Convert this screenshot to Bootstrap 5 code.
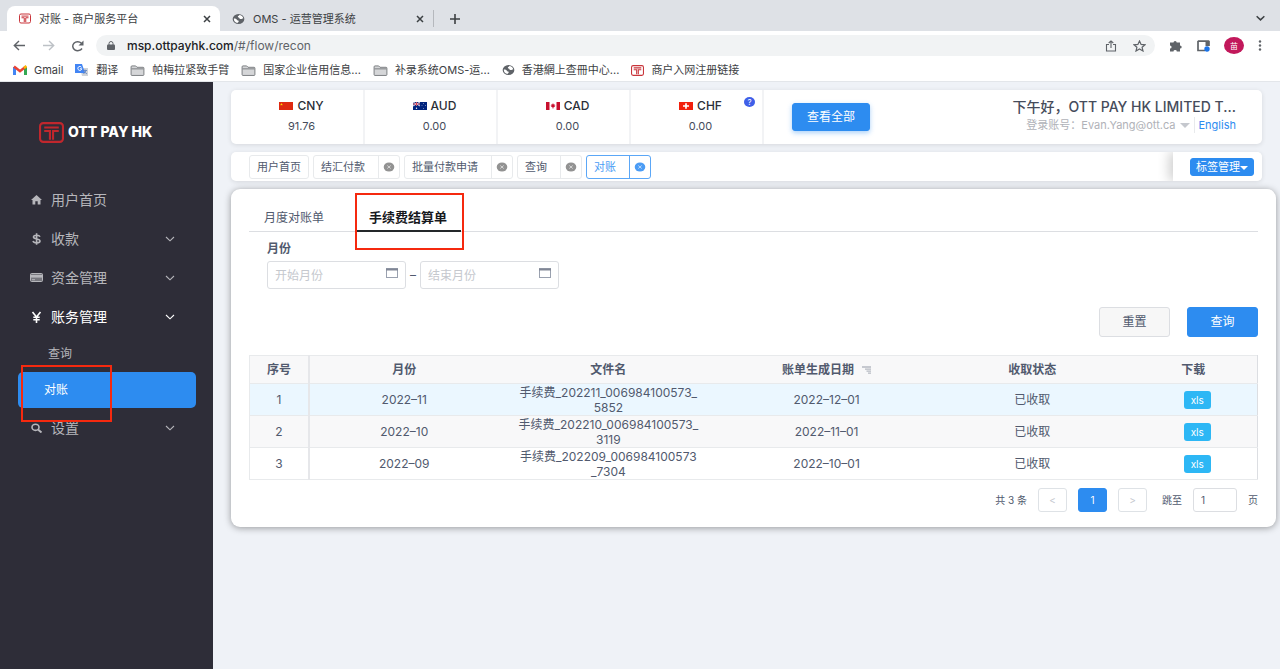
<!DOCTYPE html>
<html lang="zh-CN">
<head>
<meta charset="utf-8">
<meta name="viewport" content="width=device-width, initial-scale=1">
<title>对账 - 商户服务平台</title>
<link href="https://cdn.jsdelivr.net/npm/bootstrap@5.3.0/dist/css/bootstrap.min.css" rel="stylesheet">
<style>
  :root { --blue: #2d8cf0; --line: #e8eaec; --ink: #515a6e; }
  body { font-family: Inter, "Noto Sans CJK SC", sans-serif; font-size: 12px; line-height: 16px; color: var(--ink); background: #eff2f7; }
  a { text-decoration: none; color: inherit; }
  button { font: inherit; color: inherit; }
  svg { display: block; flex: none; }
  .plain { border: 0; background: none; padding: 0; }
  /* browser frame */
  .tabstrip { height: 31px; background: #dee1e6; padding: 6px 14px 0 7px; font-size: 11px; color: #3c4043; }
  .page-tab { height: 25px; padding: 0 9px 0 12px; width: 213px; }
  .page-tab.current { background: #fff; border-radius: 8px 8px 0 0; }
  .addressbar { height: 29px; background: #fff; padding: 0 18px 0 13px; color: #5f6368; }
  .omni { height: 21px; border-radius: 11px; background: #f1f3f4; padding: 0 9px 0 11px; font-size: 12px; }
  .omni b { font-weight: 500; color: #202124; }
  .browser-tools { gap: 14px; padding-left: 14px; }
  .avatar { width: 20px; height: 17px; border-radius: 50%; background: #c2185b; color: #fff; font-size: 8px; }
  .bookmarks { height: 22px; background: #fff; border-bottom: 1px solid #e3e6ea; padding: 0 13px 1px; gap: 12px; font-size: 11px; color: #3c4043; }
  .bookmarks a { gap: 7px; white-space: nowrap; }
  /* sidebar */
  .side { width: 213px; background: #2e2d38; color: #b6b6bb; flex: none; }
  .brand { height: 98px; padding: 2px 0 0 39px; gap: 4px; color: #fff; font-size: 14px; font-weight: 800; }
  .side-item { height: 39px; padding: 0 38px 0 29px; gap: 7px; font-size: 14px; }
  .side-item.open { color: #fff; }
  .side-sub { height: 36px; padding-left: 48px; }
  .side-sub.active { margin: 0 17px 0 18px; padding-left: 26px; border-radius: 5px; background: var(--blue); color: #fff; }
  .callout { position: absolute; border: 2px solid #f5290f; pointer-events: none; }
  .callout-side { inset: -7px 84px -14px 3px; }
  .callout-tab { inset: -11px -3px -20px 0; }
  /* content */
  .work { padding: 8px 4px 0 18px; min-width: 0; }
  .panel { background: #fff; border-radius: 5px; box-shadow: 0 1px 5px #0000001c; margin-right: 14px; }
  .wallet { height: 54px; margin-bottom: 8px; padding-left: 1px; }
  .money { width: 133px; border-right: 2px solid #f2f3f5; color: #464c5b; gap: 4px; padding: 0 0 2px 8px; }
  .money strong { font-weight: 500; color: #2b2f38; gap: 4px; }
  .money span { font-size: 11px; }
  .help { position: absolute; top: 7px; right: 7px; width: 11px; height: 10px; border-radius: 50%; background: #3f5fe8; color: #fff; font-size: 8px; line-height: 10px; }
  .btn { --bs-btn-border-radius: 3px; --bs-btn-padding-y: 0; --bs-btn-padding-x: 0; font-size: 12px; line-height: 16px; }
  .btn-primary { --bs-btn-bg: #2d8cf0; --bs-btn-border-color: #2d8cf0; }
  .btn-all { width: 78px; height: 28px; margin-left: 28px; box-shadow: 0 2px 5px #2d8cf066; }
  .greeting { padding: 7px 26px 0 0; }
  .hello { font-size: 14px; line-height: 20px; font-weight: 500; color: #464c5b; }
  .account { font-size: 11px; color: #b0b2b8; }
  .account .english { color: var(--blue); border-left: 1px solid var(--line); padding-left: 4px; margin-left: 4px; }
  .open-tabs { height: 29px; margin-bottom: 8px; overflow: hidden; font-size: 11px; }
  .open-tabs .list { padding-left: 18px; gap: 4px; }
  .chip { height: 24px; border: 1px solid var(--line); border-radius: 3px; }
  .chip > a { padding: 0 7px; }
  .chip.closable > a { padding-right: 13px; }
  .chip > button { width: 21px; align-self: stretch; border-left: 1px solid var(--line); color: #929292; }
  .chip.on, .chip.on > button { border-color: #5ba7f7; color: #4b9cf5; }
  .tag-tools { width: 89px; padding-right: 8px; box-shadow: -4px 0 12px #00000030; background: #fff; }
  .tag-tools .btn { width: 64px; height: 18px; font-size: 11px; }
  .tag-tools .dropdown-toggle::after { margin-left: 0; vertical-align: 1px; border-width: 4px 4px 0; }
  .sheet { background: #fff; border-radius: 9px; box-shadow: 0 1px 7px #00000060; padding: 15px 18px; }
  .sheet-tabs { height: 28px; border-bottom: 1px solid #dcdee2; }
  .sheet-tabs a { height: 28px; padding: 0 15px; }
  .sheet-tabs .here { margin-left: 16px; padding: 0 14px; font-size: 13px; font-weight: 700; color: #17191d; border-bottom: 2px solid #24282a; }
  .filters { padding: 9px 0 0 18px; }
  .filters label { font-weight: 700; }
  .month { width: 139px; height: 28px; }
  .month .form-control { height: 28px; font-size: 12px; padding: 0 30px 0 7px; border-color: #dcdee2; border-radius: 3px; }
  .month .form-control::placeholder { color: #c5c8ce; }
  .month svg { position: absolute; right: 8px; top: 7px; }
  .actions { gap: 17px; margin: 18px 0; }
  .actions .btn { width: 71px; height: 30px; }
  .btn-reset { background: #f7f7f7; border-color: #dcdee2; color: var(--ink); }
  .records { table-layout: fixed; margin: 0; text-align: center; border: 1px solid var(--line); border-right-color: #dcdee2; color: var(--ink); --bs-table-color: #515a6e; }
  .records th, .records td { padding: 0; vertical-align: middle; border-color: var(--line); line-height: 15px; }
  .records th { height: 28px; background: #f8f8f9; color: var(--ink); font-weight: 700; }
  .records td { height: 32px; }
  .records th:first-child, .records td:first-child { border-right: 2px solid #e6e7ea; }
  .records .hot td { background: #ebf7ff; }
  .records .even td { background: #f8f8f9; }
  .records .fname { padding: 0 12px; }
  .btn-xls { width: 27px; height: 18px; font-size: 10px; background: #2db7f5; color: #fff; margin-left: 8px; border: 0; }
  .pager { margin-top: 8px; gap: 11px; font-size: 10px; }
  .pager .btn, .pager .form-control { height: 24px; font-size: 10px; border-radius: 3px; border-color: #dcdee2; }
  .pager .btn { width: 29px; color: #c5c8ce; }
  .pager .btn-primary { color: #fff; border-color: var(--blue); }
  .pager .form-control { width: 44px; padding: 0 7px; color: var(--ink); }
</style>
</head>
<body class="d-flex flex-column min-vh-100">
<svg width="0" height="0" class="position-absolute" aria-hidden="true">
  <symbol id="ott" viewBox="0 0 24 20"><rect x="1" y="1" width="22" height="18" rx="3" fill="none" stroke="currentColor" stroke-width="2"/><path d="M5 5.200h14M5 8.500h5.500V17M19 8.500h-5.500V17" fill="none" stroke="currentColor" stroke-width="2"/></symbol>
  <symbol id="globe" viewBox="0 0 16 14"><ellipse cx="8" cy="7" rx="7.200" ry="6.300" fill="#5f6368"/><path d="M2.300 6.500c2 0 3 .5 4 1.600.8.900 2 .4 2 1.700 0 1.200-1.300 1-1.500 2.200C4 11.700 2 9.500 2.300 6.500zM9 2c2.500 0 4.400 1.800 4.900 4-1.400.2-2.300 1.600-3.700 1C8.800 6.400 9.500 5.300 8 5c-1.200-.2-1-1.700.2-1.900.6-.1.500-.7.800-1.100z" fill="#fff"/></symbol>
  <symbol id="folder" viewBox="0 0 16 12"><path d="M1 10.500V2q0-1 1-1h4l1.500 1.500H14q1 0 1 1v7q0 .9-1 .9H2q-1 0-1-.9z" fill="#d5d6d8" stroke="#74777b"/><path d="M1.500 4.200h13" stroke="#74777b"/></symbol>
  <symbol id="x" viewBox="0 0 8 8"><path d="M1 1l6 6M7 1L1 7" stroke="currentColor" stroke-width="1.500"/></symbol>
  <symbol id="xc" viewBox="0 0 12 10"><ellipse cx="6" cy="5" rx="5.300" ry="4.600" fill="currentColor"/><path d="M4.300 3.500l3.400 3M7.700 3.500l-3.400 3" stroke="#fff" stroke-width=".6"/></symbol>
  <symbol id="down" viewBox="0 0 10 6"><path d="M1 1l4 3.800L9 1" fill="none" stroke="currentColor" stroke-width="1.100"/></symbol>
  <symbol id="cal" viewBox="0 0 12 10"><rect x=".5" y=".5" width="11" height="9" fill="none" stroke="#9aa1af"/><path d="M0 1.500h12" stroke="#808695" stroke-width="2"/></symbol>
</svg>

<header>
  <div class="tabstrip d-flex align-items-center">
    <div class="page-tab current d-flex align-items-center">
      <svg width="12" height="11" style="color:#c9353b"><use href="#ott"/></svg>
      <span class="ms-2 me-auto">对账 - 商户服务平台</span>
      <button class="plain" aria-label="关闭"><svg width="8" height="8"><use href="#x"/></svg></button>
    </div>
    <div class="page-tab d-flex align-items-center">
      <svg width="13" height="12"><use href="#globe"/></svg>
      <span class="ms-2 me-auto">OMS - 运营管理系统</span>
      <button class="plain" aria-label="关闭"><svg width="8" height="8"><use href="#x"/></svg></button>
    </div>
    <div class="vr my-1"></div>
    <button class="plain ms-3" aria-label="新标签页"><svg width="10" height="10"><path d="M5 0v10M0 5h10" stroke="#3c4043" stroke-width="1.600"/></svg></button>
    <button class="plain ms-auto" aria-label="搜索标签页"><svg width="11" height="7" viewBox="0 0 10 6"><path d="M1.500 1L5 4.300 8.500 1" fill="none" stroke="#3c4043" stroke-width="1.400"/></svg></button>
  </div>
  <div class="addressbar d-flex align-items-center">
    <button class="plain" aria-label="后退"><svg width="13" height="11"><path d="M12 5.500H1.500M6 1L1.300 5.500 6 10" fill="none" stroke="#5f6368" stroke-width="1.400"/></svg></button>
    <button class="plain ms-3" aria-label="前进"><svg width="13" height="11"><path d="M1 5.500h10.500M7 1l4.700 4.500L7 10" fill="none" stroke="#bdc1c6" stroke-width="1.400"/></svg></button>
    <button class="plain ms-3 me-2" aria-label="刷新"><svg width="13" height="12"><path d="M11 8.500A5 4.500 0 1 1 10.300 3" fill="none" stroke="#5f6368" stroke-width="1.500"/><path d="M12.500.5v5H7.500z" fill="#5f6368"/></svg></button>
    <div class="omni ms-1 flex-grow-1 d-flex align-items-center">
      <svg width="8" height="9"><rect y="3.500" width="8" height="5.500" rx="1" fill="#5f6368"/><path d="M2 4V2.500a2 2 0 0 1 4 0V4" fill="none" stroke="#5f6368"/></svg>
      <span class="ms-2 ps-1 me-auto"><b>msp.ottpayhk.com</b>/#/flow/recon</span>
      <button class="plain me-3" aria-label="分享"><svg width="12" height="12"><path d="M4 4.500H1.500v6.500h9V4.500H8M6 8V1M3.700 3L6 .9 8.300 3" fill="none" stroke="#5f6368" stroke-width="1.100"/></svg></button>
      <button class="plain" aria-label="收藏"><svg width="13" height="12"><path d="M6.500 1l1.600 3.400 3.900.4-2.900 2.500.9 3.700-3.500-2-3.500 2 .9-3.700L1 4.800l3.900-.4z" fill="none" stroke="#5f6368" stroke-width="1.200"/></svg></button>
    </div>
    <div class="browser-tools d-flex align-items-center">
      <button class="plain" aria-label="扩展"><svg width="14" height="12" viewBox="0 0 14 12"><path d="M1 2.500h3.500a1.600 1.500 0 1 1 3.200 0H11v3a1.700 1.500 0 1 1 0 3v3H7.800a1.600 1.400 0 1 0-3.300 0H1V8.600a1.600 1.500 0 1 0 0-3z" fill="#5f6368"/></svg></button>
      <button class="plain" aria-label="侧边栏"><svg width="13" height="12"><path d="M.8 1.200h11.500M1 1v9.500h7M12 1v5" fill="none" stroke="#5f6368" stroke-width="1.700"/><path d="M8.500 1H12v5H8.500z" fill="#5f6368"/><circle cx="10" cy="9" r="2.700" fill="#1a73e8"/></svg></button>
      <button class="plain avatar d-flex align-items-center justify-content-center">苗</button>
      <button class="plain" aria-label="菜单"><svg width="4" height="11" fill="#5f6368"><circle cx="2" cy="1.500" r="1.200"/><circle cx="2" cy="5.500" r="1.200"/><circle cx="2" cy="9.500" r="1.200"/></svg></button>
    </div>
  </div>
  <nav class="bookmarks d-flex align-items-center">
    <a class="d-flex align-items-center" href="#"><svg width="14" height="10"><path d="M1.500 10V2" stroke="#4285f4" stroke-width="3"/><path d="M12.500 10V2" stroke="#34a853" stroke-width="3"/><path d="M1 1.500l6 4.700 6-4.700" fill="none" stroke="#ea4335" stroke-width="2.600"/><path d="M11 3l2.500-2" stroke="#fbbc04" stroke-width="2.500"/></svg>Gmail</a>
    <a class="d-flex align-items-center" href="#"><svg width="14" height="12"><path d="M5 4h8v8H7z" fill="#cfd3d8"/><path d="M0 0h7l3 9H0z" fill="#4285f4"/><path d="M6.500 3.300a2 2 0 1 0 .3 1.500H4.900" fill="none" stroke="#fff"/><path d="M8 6.500h4M10 5.500v1M11.300 6.500L8.500 10M9 7.500l3 2.500" stroke="#5a7fc0" stroke-width=".8"/></svg>翻译</a>
    <a class="d-flex align-items-center" href="#"><svg width="15" height="11"><use href="#folder"/></svg>帕梅拉紧致手臂</a>
    <a class="d-flex align-items-center" href="#"><svg width="15" height="11"><use href="#folder"/></svg>国家企业信用信息...</a>
    <a class="d-flex align-items-center" href="#"><svg width="15" height="11"><use href="#folder"/></svg>补录系统OMS-运...</a>
    <a class="d-flex align-items-center" href="#"><svg width="13" height="12"><use href="#globe"/></svg>香港網上查冊中心...</a>
    <a class="d-flex align-items-center" href="#"><svg width="13" height="11" style="color:#c9353b"><use href="#ott"/></svg>商户入网注册链接</a>
  </nav>
</header>

<div class="d-flex flex-grow-1">
  <aside class="side">
    <div class="brand d-flex align-items-center"><svg width="25" height="21" style="color:#c1272d"><use href="#ott"/></svg>OTT PAY HK</div>
    <nav>
      <a class="side-item d-flex align-items-center" href="#"><svg width="15" height="11"><path d="M7.500 1L2 6h1.500v4.500h2.800V7.300h2.400v3.200h2.800V6H13z" fill="currentColor"/></svg>用户首页</a>
      <a class="side-item d-flex align-items-center" href="#"><svg width="15" height="12"><path d="M11 3.800C10.500 2.500 9.300 2.200 7.600 2.200 5.800 2.200 4.500 2.700 4.500 4c0 2.600 6.500 1.300 6.500 4 0 1.400-1.500 1.900-3.300 1.900-2 0-3.300-.5-3.700-1.900M7.600.3v11.400" fill="none" stroke="currentColor" stroke-width="1.600"/></svg>收款<svg class="ms-auto" width="10" height="6"><use href="#down"/></svg></a>
      <a class="side-item d-flex align-items-center" href="#"><svg width="15" height="9"><rect x="1.500" y=".5" width="12" height="8" rx="1" fill="#77777e" stroke="currentColor"/><path d="M1.500 3.300h12" stroke="currentColor" stroke-width="2.600"/><path d="M3 6.700h3" stroke="currentColor"/></svg>资金管理<svg class="ms-auto" width="10" height="6"><use href="#down"/></svg></a>
      <a class="side-item open d-flex align-items-center" href="#"><svg width="15" height="12"><path d="M3.500 1l4 5 4-5M7.500 6v6M4.300 6.300h6.400M4.300 8.800h6.400" fill="none" stroke="currentColor" stroke-width="1.600"/></svg>账务管理<svg class="ms-auto" width="10" height="6"><use href="#down"/></svg></a>
      <a class="side-sub d-flex align-items-center" href="#">查询</a>
      <a class="side-sub active d-flex align-items-center position-relative" href="#">对账<span class="callout callout-side"></span></a>
      <a class="side-item d-flex align-items-center" href="#"><svg width="15" height="10"><ellipse cx="6.500" cy="4.300" rx="3.500" ry="3.100" fill="none" stroke="currentColor" stroke-width="1.600"/><path d="M9 6.500l3.500 3" stroke="currentColor" stroke-width="2"/></svg>设置<svg class="ms-auto" width="10" height="6"><use href="#down"/></svg></a>
    </nav>
  </aside>

  <main class="work flex-grow-1">
    <section class="panel wallet d-flex">
      <div class="money d-flex flex-column align-items-center justify-content-center"><strong class="d-flex align-items-center"><svg width="14" height="8"><path fill="#de2910" d="M0 0h14v8H0z"/><path d="M2.500 1l.4 1h1l-.8.6.3 1-.9-.6-.9.600.3-1L1 2h1z" fill="#ffde00"/></svg>CNY</strong><span>91.76</span></div>
      <div class="money d-flex flex-column align-items-center justify-content-center"><strong class="d-flex align-items-center"><svg width="14" height="8"><path fill="#00247d" d="M0 0h14v8H0z"/><path d="M0 0l7 4M7 0L0 4M3.500 0v4M0 2h7" stroke="#fff" stroke-width=".9"/><path d="M3.500 0v4M0 2h7" stroke="#cf142b" stroke-width=".7"/><g fill="#fff"><circle cx="3.500" cy="6.200" r=".7"/><circle cx="10.500" cy="1.500" r=".4"/><circle cx="10.500" cy="6.500" r=".4"/><circle cx="12.500" cy="3.500" r=".4"/><circle cx="9" cy="3.700" r=".4"/></g></svg>AUD</strong><span>0.00</span></div>
      <div class="money d-flex flex-column align-items-center justify-content-center"><strong class="d-flex align-items-center"><svg width="14" height="8"><path fill="#fff" d="M0 0h14v8H0z"/><path fill="#c8102e" d="M0 0h3.500v8H0zM10.500 0H14v8h-3.500zM7 1l.7 1.400.9-.3-.2 1.400 1.100.2-1.800 1.900H7.200V7h-.4V5.600H6.300L4.500 3.700l1.100-.2-.2-1.400.9.300z"/></svg>CAD</strong><span>0.00</span></div>
      <div class="money d-flex flex-column align-items-center justify-content-center position-relative"><strong class="d-flex align-items-center"><svg width="14" height="8"><path fill="#f21f0c" d="M0 0h14v8H0z"/><path d="M7 1.300v5.400M4 4h6" stroke="#fff" stroke-width="1.700"/></svg>CHF</strong><span>0.00</span><button class="plain help" aria-label="帮助">?</button></div>
      <button class="btn btn-primary btn-all align-self-center">查看全部</button>
      <div class="greeting ms-auto text-end">
        <div class="hello">下午好，OTT PAY HK LIMITED T...</div>
        <div class="account d-flex align-items-center justify-content-end">登录账号：Evan.Yang@ott.ca<svg class="ms-1" width="10" height="5"><path d="M0 0h10L5 5z" fill="#c5c8ce"/></svg><a class="english" href="#">English</a></div>
      </div>
    </section>

    <nav class="panel open-tabs d-flex">
      <div class="list d-flex align-items-center flex-grow-1">
        <div class="chip d-flex align-items-center"><a href="#">用户首页</a></div>
        <div class="chip closable d-flex align-items-center"><a href="#">结汇付款</a><button class="plain d-flex align-items-center justify-content-center" aria-label="关闭"><svg width="12" height="10"><use href="#xc"/></svg></button></div>
        <div class="chip closable d-flex align-items-center"><a href="#">批量付款申请</a><button class="plain d-flex align-items-center justify-content-center" aria-label="关闭"><svg width="12" height="10"><use href="#xc"/></svg></button></div>
        <div class="chip closable d-flex align-items-center"><a href="#">查询</a><button class="plain d-flex align-items-center justify-content-center" aria-label="关闭"><svg width="12" height="10"><use href="#xc"/></svg></button></div>
        <div class="chip closable on d-flex align-items-center"><a href="#">对账</a><button class="plain d-flex align-items-center justify-content-center" aria-label="关闭"><svg width="12" height="10"><use href="#xc"/></svg></button></div>
      </div>
      <div class="tag-tools d-flex align-items-center justify-content-end"><button class="btn btn-primary dropdown-toggle">标签管理</button></div>
    </nav>

    <section class="sheet">
      <nav class="sheet-tabs d-flex">
        <a class="d-flex align-items-center" href="#">月度对账单</a>
        <a class="here d-flex align-items-center position-relative" href="#">手续费结算单<span class="callout callout-tab"></span></a>
      </nav>
      <form>
        <div class="filters">
          <label for="from">月份</label>
          <div class="d-flex align-items-center mt-1">
            <div class="month position-relative"><input class="form-control" id="from" placeholder="开始月份"><svg width="12" height="10"><use href="#cal"/></svg></div>
            <span class="px-1">–</span>
            <div class="month position-relative"><input class="form-control" id="to" aria-label="结束月份" placeholder="结束月份"><svg width="12" height="10"><use href="#cal"/></svg></div>
          </div>
        </div>
        <div class="actions d-flex justify-content-end">
          <button type="reset" class="btn btn-reset">重置</button>
          <button type="button" class="btn btn-primary">查询</button>
        </div>
      </form>
      <table class="table records">
        <colgroup><col style="width:5.900%"><col style="width:18.800%"><col style="width:21.800%"><col style="width:21.500%"><col style="width:19.300%"><col></colgroup>
        <thead><tr><th>序号</th><th>月份</th><th>文件名</th><th><span class="d-flex align-items-center justify-content-center">账单生成日期<svg class="ms-2" width="9" height="8"><path d="M0 1h9M3 3.200H9M4.500 5.200H9M6 7.200h3" stroke="#b5b9c2" stroke-width="1.300"/></svg></span></th><th>收取状态</th><th>下载</th></tr></thead>
        <tbody>
          <tr class="hot"><td>1</td><td>2022–11</td><td class="fname">手续费_202211_006984100573_<wbr>5852</td><td>2022–12–01</td><td>已收取</td><td><button class="btn btn-xls">xls</button></td></tr>
          <tr class="even"><td>2</td><td>2022–10</td><td class="fname">手续费_202210_006984100573_<wbr>3119</td><td>2022–11–01</td><td>已收取</td><td><button class="btn btn-xls">xls</button></td></tr>
          <tr><td>3</td><td>2022–09</td><td class="fname">手续费_202209_006984100573<wbr>_7304</td><td>2022–10–01</td><td>已收取</td><td><button class="btn btn-xls">xls</button></td></tr>
        </tbody>
      </table>
      <div class="pager d-flex align-items-center justify-content-end">
        <span>共 3 条</span>
        <button class="btn border" aria-label="上一页">&lt;</button>
        <button class="btn btn-primary">1</button>
        <button class="btn border" aria-label="下一页">&gt;</button>
        <label class="ms-1" for="jump">跳至</label>
        <input class="form-control" id="jump" value="1">
        <span>页</span>
      </div>
    </section>
  </main>
</div>
<script src="https://cdn.jsdelivr.net/npm/bootstrap@5.3.0/dist/js/bootstrap.bundle.min.js"></script>
</body>
</html>
